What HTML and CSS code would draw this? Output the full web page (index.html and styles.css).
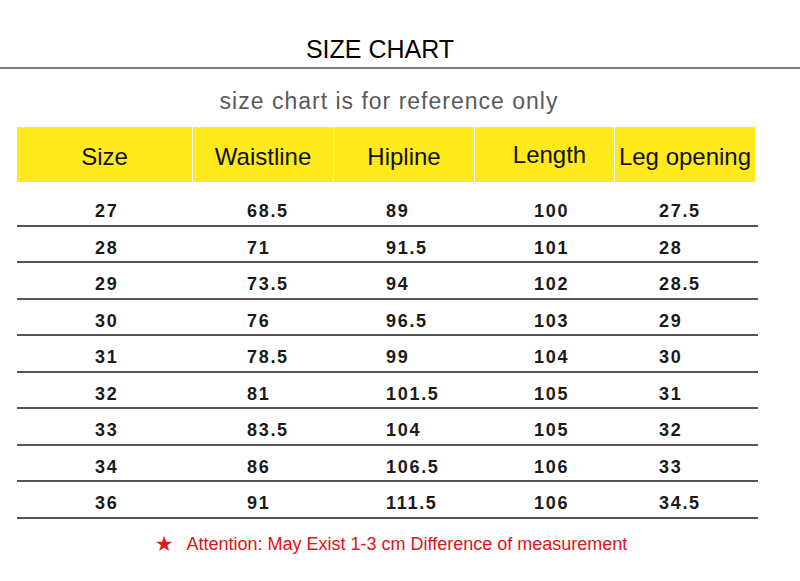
FILE: index.html
```html
<!DOCTYPE html>
<html lang="en">
<head>
<meta charset="utf-8">
<title>Size Chart</title>
<link rel="stylesheet" href="styles.css">
</head>
<body>
<div class="page">
  <h1 class="title">SIZE CHART</h1>
  <div class="rule"></div>
  <p class="subtitle">size chart is for reference only</p>
  <div class="chart">
    <div class="head">
      <div class="hcell">Size</div>
      <div class="hcell">Waistline</div>
      <div class="hcell">Hipline</div>
      <div class="hcell hcell-length">Length</div>
      <div class="hcell">Leg opening</div>
    </div>
    <div class="rows">
      <div class="row"><span>27</span><span>68.5</span><span>89</span><span>100</span><span>27.5</span></div>
      <div class="row"><span>28</span><span>71</span><span>91.5</span><span>101</span><span>28</span></div>
      <div class="row"><span>29</span><span>73.5</span><span>94</span><span>102</span><span>28.5</span></div>
      <div class="row"><span>30</span><span>76</span><span>96.5</span><span>103</span><span>29</span></div>
      <div class="row"><span>31</span><span>78.5</span><span>99</span><span>104</span><span>30</span></div>
      <div class="row"><span>32</span><span>81</span><span>101.5</span><span>105</span><span>31</span></div>
      <div class="row"><span>33</span><span>83.5</span><span>104</span><span>105</span><span>32</span></div>
      <div class="row"><span>34</span><span>86</span><span>106.5</span><span>106</span><span>33</span></div>
      <div class="row"><span>36</span><span>91</span><span>111.5</span><span>106</span><span>34.5</span></div>
    </div>
  </div>
  <p class="note"><span class="star">★</span><span>Attention: May Exist 1-3 cm Difference of measurement</span></p>
</div>
</body>
</html>
```
FILE: styles.css
```css
html, body {
  margin: 0;
  padding: 0;
  background: #ffffff;
}

.page {
  width: 800px;
  height: 581px;
  overflow: hidden;
  font-family: "Liberation Sans", Arial, sans-serif;
  color: #111;
}

.title {
  margin: 34px 0 0 0;
  padding-right: 40px;
  font-size: 25px;
  font-weight: normal;
  line-height: 30px;
  text-align: center;
  color: #000;
}

.rule {
  margin-top: 3px;
  height: 0;
  border-top: 2px solid #7d7d7d;
}

.subtitle {
  margin: 17px 0 0 0;
  width: 778px;
  font-size: 23px;
  line-height: 30px;
  letter-spacing: 1px;
  text-align: center;
  color: #5a5a5a;
}

.chart {
  margin: 11px 0 0 17px;
  width: 741px;
}

.head {
  display: grid;
  grid-template-columns: 175px 140px 140px 139px 140px;
  column-gap: 1px;
  height: 55px;
}

.hcell {
  box-sizing: border-box;
  height: 55px;
  padding-top: 4px;
  background: #ffea1c;
  font-size: 24px;
  line-height: 51px;
  text-align: center;
  color: #111;
  white-space: nowrap;
}

.hcell-length {
  padding: 1px 0 0 10px;
  line-height: 53px;
}

.rows {
  margin-top: 8px;
}

.row {
  display: grid;
  grid-template-columns: 152px 139px 148px 125px 1fr;
  box-sizing: border-box;
  height: 36.5px;
  padding: 8px 0 0 78px;
  border-bottom: 2px solid #555;
  font-size: 18px;
  font-weight: bold;
  line-height: 26.5px;
  letter-spacing: 1.7px;
  color: #1a1a1a;
}

.note {
  margin: 13px 0 0 0;
  width: 782px;
  display: flex;
  justify-content: center;
  align-items: center;
  gap: 13px;
  font-size: 18px;
  line-height: 24px;
  color: #e3111b;
}

.star {
  font-family: "DejaVu Sans", sans-serif;
  font-size: 21px;
  color: #e8141b;
}
```
